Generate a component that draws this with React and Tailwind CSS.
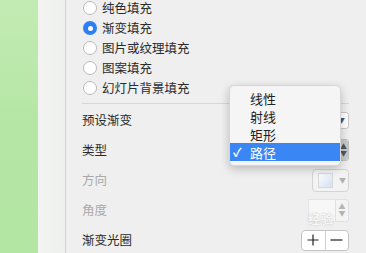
import React from "react";

const fillOptions = [
  { label: "纯色填充", checked: false },
  { label: "渐变填充", checked: true },
  { label: "图片或纹理填充", checked: false },
  { label: "图案填充", checked: false },
  { label: "幻灯片背景填充", checked: false },
];

const menuItems = ["线性", "射线", "矩形", "路径"];

function Radio({ checked }) {
  if (checked) {
    return (
      <span className="w-[14px] h-[14px] rounded-full bg-[#2d7ff5] flex items-center justify-center shrink-0">
        <span className="w-[5px] h-[5px] rounded-full bg-white" />
      </span>
    );
  }
  return (
    <span className="w-[14px] h-[14px] rounded-full bg-white border border-[#b9b9b9] shrink-0" />
  );
}

function Arrows({ light }) {
  return (
    <span className={"flex flex-col items-center leading-none text-[7px] " + (light ? "text-[#b5b5b5]" : "text-[#555]")}>
      <span>▲</span>
      <span>▼</span>
    </span>
  );
}

export default function App() {
  return (
    <div
      className="w-[366px] h-[253px] flex overflow-hidden bg-[#eeeeee] relative"
      style={{ fontFamily: '"Noto Sans CJK SC", "Noto Sans", sans-serif' }}
    >
      {/* green slide edge */}
      <div className="w-[38px] h-full bg-gradient-to-b from-[#c2ebb3] via-[#b5e6a5] to-[#b3e5a3]" />
      <div className="w-[27px] h-full bg-gradient-to-r from-[#f3f4f2] to-[#eef0ee]" />
      <div className="w-px h-full bg-[#d2d2d2]" />

      <div className="flex-1 h-full bg-[#efefef] pl-[16px] pr-[17px]">
        <div className="mt-[-2px] pl-[1px]">
          {fillOptions.map((o) => (
            <div key={o.label} className="h-[20px] flex items-center gap-[5px]">
              <Radio checked={o.checked} />
              <span className="text-[12.5px] text-[#2a2a2a] leading-none">{o.label}</span>
            </div>
          ))}
        </div>

        <div className="mt-[5px] h-px bg-[#d6d6d6]" />

        <div className="mt-[1px] text-[12.5px] leading-none">
          <div className="h-[30px] flex items-center justify-between">
            <span className="text-[#2a2a2a]">预设渐变</span>
            <div className="w-[110px] h-[17px] rounded-[3px] bg-white border border-[#c8c8c8] flex items-center justify-end pr-[3px]">
              <span className="text-[7px] text-[#555]">▼</span>
            </div>
          </div>
          <div className="h-[30px] flex items-center justify-between">
            <span className="text-[#2a2a2a]">类型</span>
            <div className="w-[110px] h-[22px] rounded-[3px] bg-white border border-[#c0c0c0] flex justify-end overflow-hidden">
              <div className="w-[9px] h-full bg-[#c9c9cb] flex items-center justify-center">
                <Arrows />
              </div>
            </div>
          </div>
          <div className="h-[30px] flex items-center justify-between">
            <span className="text-[#a9a9a9]">方向</span>
            <div className="w-[37px] h-[23px] rounded-[4px] border border-[#d4d4d4] bg-[#f3f3f3] flex items-center pl-[5px] gap-[6px]">
              <span className="w-[15px] h-[15px] border border-[#d8d8d8] bg-gradient-to-br from-[#fbfcff] to-[#d6e0f3]" />
              <span className="text-[7px] text-[#b0b0b0]">▼</span>
            </div>
          </div>
          <div className="h-[30px] flex items-center justify-between relative">
            <span className="text-[#a9a9a9]">角度</span>
            <div className="w-[41px] h-[23px] flex">
              <div className="flex-1 bg-[#f7f7f7] border border-[#e4e4e4] border-r-0" />
              <div className="w-[14px] h-full border border-[#e0e0e0] rounded-r-[3px] bg-[#f4f4f4] flex items-center justify-center">
                <Arrows light />
              </div>
            </div>
            <span className="absolute right-[15px] top-[18px] text-[12px] font-bold text-[#f8f8f8] tracking-[1px] [text-shadow:0_0_2px_#bdbdbd]">
              经验
            </span>
          </div>
          <div className="h-[30px] flex items-center justify-between">
            <span className="text-[#2a2a2a]">渐变光圈</span>
            <div className="w-[48px] h-[21px] rounded-[4px] border border-[#c4c4c4] bg-white flex">
              <span className="flex-1 flex items-center justify-center border-r border-[#d0d0d0]">
                <svg width="12" height="12" viewBox="0 0 12 12">
                  <path d="M6 0.5V11.5M0.5 6H11.5" stroke="#222" strokeWidth="1.2" />
                </svg>
              </span>
              <span className="flex-1 flex items-center justify-center">
                <svg width="13" height="12" viewBox="0 0 13 12">
                  <path d="M0.5 6H12.5" stroke="#222" strokeWidth="1.2" />
                </svg>
              </span>
            </div>
          </div>
        </div>
      </div>

      {/* open popup menu */}
      <div className="absolute left-[229px] top-[85px] w-[112px] rounded-[5px] bg-[#f5f5f5] border border-[#d6d6d6] shadow-[0_3px_10px_rgba(0,0,0,0.22)] pt-[3px] pb-[4px]">
        {menuItems.map((item) => {
          const sel = item === "路径";
          return (
            <div
              key={item}
              className={
                "h-[18px] flex items-center relative text-[13px] leading-none " +
                (sel ? "bg-[#3b86f5] text-white" : "text-[#222]")
              }
            >
              {sel && <span className="absolute left-[3px] text-[12px] font-bold">✓</span>}
              <span className="pl-[20px]">{item}</span>
            </div>
          );
        })}
      </div>
    </div>
  );
}
